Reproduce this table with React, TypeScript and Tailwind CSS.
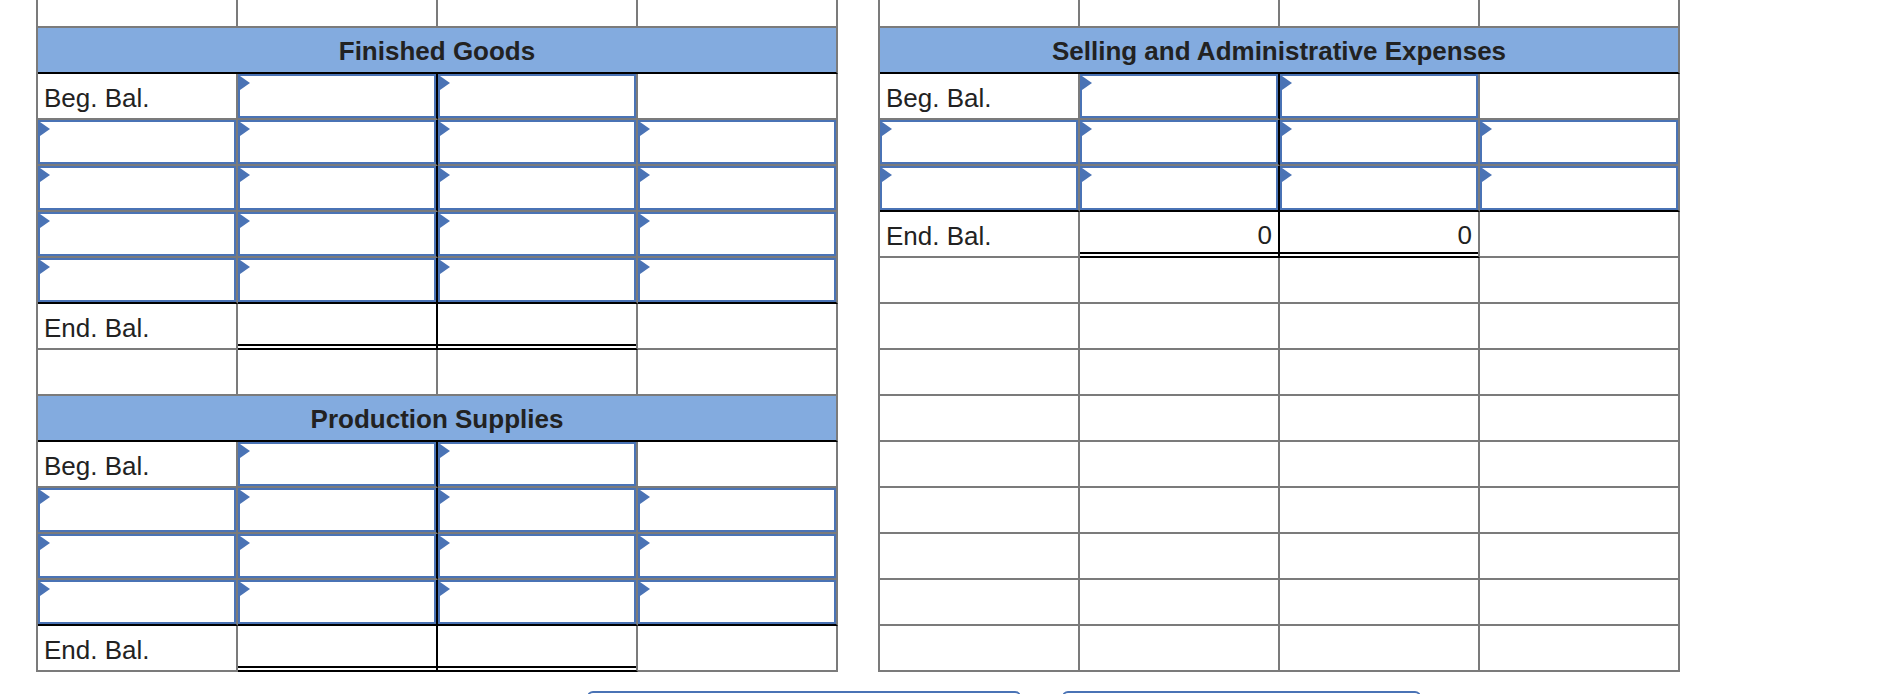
import React from "react";

type C = { t: "e" | "l" | "i" | "v"; text?: string; r?: "k"; b?: "k" | "d" };
type Row = { kind: "top" } | { kind: "header"; title: string } | { kind: "cells"; cells: C[] };

const e = (o: Partial<C> = {}): C => ({ t: "e", ...o });
const inp = (o: Partial<C> = {}): C => ({ t: "i", ...o });

const begRow: Row = { kind: "cells", cells: [{ t: "l", text: "Beg. Bal." }, inp({ r: "k" }), inp(), e()] };
const inRow: Row = { kind: "cells", cells: [inp(), inp({ r: "k" }), inp(), inp()] };
const inRowLast: Row = {
  kind: "cells",
  cells: [inp({ b: "k" }), inp({ r: "k", b: "k" }), inp({ b: "k" }), inp({ b: "k" })],
};
const endRow: Row = {
  kind: "cells",
  cells: [{ t: "l", text: "End. Bal." }, e({ r: "k", b: "d" }), e({ b: "d" }), e()],
};
const emptyRow: Row = { kind: "cells", cells: [e(), e(), e(), e()] };

const leftRows: Row[] = [
  { kind: "top" },
  { kind: "header", title: "Finished Goods" },
  begRow,
  inRow,
  inRow,
  inRow,
  inRowLast,
  endRow,
  emptyRow,
  { kind: "header", title: "Production Supplies" },
  begRow,
  inRow,
  inRow,
  inRowLast,
  endRow,
];

const rightRows: Row[] = [
  { kind: "top" },
  { kind: "header", title: "Selling and Administrative Expenses" },
  begRow,
  inRow,
  inRowLast,
  {
    kind: "cells",
    cells: [{ t: "l", text: "End. Bal." }, { t: "v", text: "0", r: "k", b: "d" }, { t: "v", text: "0", b: "d" }, e()],
  },
  emptyRow,
  emptyRow,
  emptyRow,
  emptyRow,
  emptyRow,
  emptyRow,
  emptyRow,
  emptyRow,
  emptyRow,
];

function Tri() {
  return (
    <svg className="absolute left-0 top-0" width="10" height="14" viewBox="0 0 10 14">
      <polygon points="0,0 10,7 0,14" fill="#4a73b5" />
    </svg>
  );
}

function CellView({ c }: { c: C }) {
  const r = c.r === "k" ? "border-r-black" : "border-r-[#7b7b7b]";
  const b = c.b === "k" || c.b === "d" ? "border-b-black" : "border-b-[#7b7b7b]";
  return (
    <div className={`relative box-border h-full w-[200px] border-r-2 border-b-2 ${r} ${b}`}>
      {c.t === "i" && (
        <div className="relative box-border h-full w-full border-2 border-[#4a73b5] bg-white">
          <Tri />
        </div>
      )}
      {c.t === "l" && (
        <div className="flex h-full items-center pl-[6px] pt-[4px] text-[26px] leading-none text-[#222]">{c.text}</div>
      )}
      {c.t === "v" && (
        <div className="flex h-full items-center justify-end pr-[6px] pt-[2px] text-[26px] leading-none text-[#222]">
          {c.text}
        </div>
      )}
      {c.b === "d" && <div className="absolute bottom-[2px] left-0 right-0 h-[2px] bg-black" />}
    </div>
  );
}

function Table({ rows }: { rows: Row[] }) {
  return (
    <div className="box-border w-[802px] border-l-2 border-l-[#7b7b7b]">
      {rows.map((row, i) => {
        if (row.kind === "top") {
          return (
            <div key={i} className="flex h-[28px]">
              {[0, 1, 2, 3].map((k) => (
                <div key={k} className="box-border h-full w-[200px] border-r-2 border-b-2 border-[#7b7b7b]" />
              ))}
            </div>
          );
        }
        if (row.kind === "header") {
          return (
            <div key={i} className="flex h-[46px]">
              <div className="box-border flex h-full w-[800px] items-center justify-center border-r-2 border-b-2 border-r-[#7b7b7b] border-b-black bg-[#83abdf] pt-[2px] text-[26px] font-bold leading-none text-[#222]">
                {row.title}
              </div>
            </div>
          );
        }
        return (
          <div key={i} className="flex h-[46px]">
            {row.cells.map((c, k) => (
              <CellView key={k} c={c} />
            ))}
          </div>
        );
      })}
    </div>
  );
}

export default function App() {
  return (
    <div className="h-[694px] w-full overflow-hidden bg-white font-['Liberation_Sans',Arial,sans-serif]">
      <div className="flex gap-[40px] pl-[36px]">
        <Table rows={leftRows} />
        <Table rows={rightRows} />
      </div>
      <div className="mt-[19px] flex gap-[41px] pl-[587px]">
        <div className="box-border h-[40px] w-[434px] rounded-[6px] border-2 border-[#4a73b5] bg-white" />
        <div className="box-border h-[40px] w-[359px] rounded-[6px] border-2 border-[#4a73b5] bg-white" />
      </div>
    </div>
  );
}
